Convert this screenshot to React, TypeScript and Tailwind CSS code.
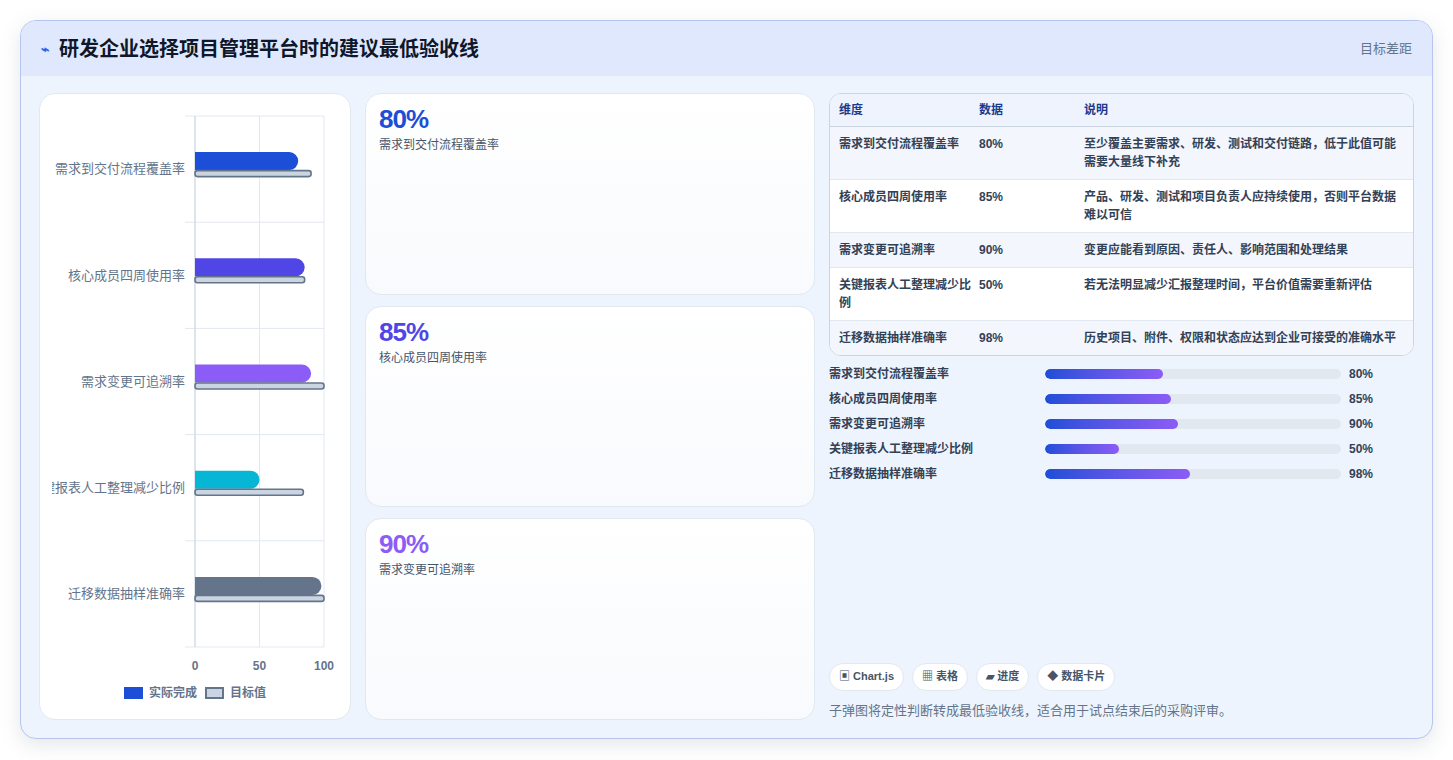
import React from "react";

const rows = [
  { name: "需求到交付流程覆盖率", v: 80, t: 90, c: "#1d4ed8" },
  { name: "核心成员四周使用率", v: 85, t: 85, c: "#4f46e5" },
  { name: "需求变更可追溯率", v: 90, t: 100, c: "#8b5cf6" },
  { name: "关键报表人工整理减少比例", v: 50, t: 84, c: "#06b6d4" },
  { name: "迁移数据抽样准确率", v: 98, t: 100, c: "#64748b" },
];

const table = [
  ["需求到交付流程覆盖率", "80%", "至少覆盖主要需求、研发、测试和交付链路，低于此值可能需要大量线下补充"],
  ["核心成员四周使用率", "85%", "产品、研发、测试和项目负责人应持续使用，否则平台数据难以可信"],
  ["需求变更可追溯率", "90%", "变更应能看到原因、责任人、影响范围和处理结果"],
  ["关键报表人工整理减少比例", "50%", "若无法明显减少汇报整理时间，平台价值需要重新评估"],
  ["迁移数据抽样准确率", "98%", "历史项目、附件、权限和状态应达到企业可接受的准确水平"],
];

function Chart() {
  const x0 = 155, sc = 1.29, top = 22, rh = 106.2;
  return (
    <svg width="311" height="600" className="block">
      {[0, 50, 100].map((g) => (
        <line key={g} x1={x0 + g * sc} x2={x0 + g * sc} y1={top} y2={top + rh * 5} stroke="#e2e8f0" />
      ))}
      {[0, 1, 2, 3, 4, 5].map((i) => (
        <line key={i} x1={x0 - 10} x2={x0 + 100 * sc} y1={top + i * rh} y2={top + i * rh} stroke="#e2e8f0" />
      ))}
      <line x1={x0} x2={x0} y1={top} y2={top + rh * 5} stroke="#cbd5e1" />
      {rows.map((r, i) => {
        const cy = top + i * rh + rh / 2;
        return (
          <g key={i}>
            <path d={`M${x0} ${cy - 17} H${x0 + r.v * sc - 9} a9 9 0 0 1 9 9 v0 a9 9 0 0 1 -9 9 H${x0} Z`} fill={r.c} />
            <rect x={x0} y={cy + 1.5} width={r.t * sc} height={6} rx={2.5} fill="#cbd5e1" stroke="#64748b" strokeWidth={1.6} />
          </g>
        );
      })}
      {[0, 50, 100].map((g) => (
        <text key={g} x={x0 + g * sc} y={top + rh * 5 + 23} textAnchor="middle" fontSize="12" fontWeight="700" fill="#64748b" fontFamily="Liberation Sans, sans-serif">{g}</text>
      ))}
    </svg>
  );
}

export default function App() {
  return (
    <div className="w-[1453px] h-[760px] bg-white p-5 pb-5" style={{ fontFamily: '"Liberation Sans", "Noto Sans CJK SC", sans-serif' }}>
      <div className="h-[719px] rounded-2xl border border-[#b8c6ef] bg-[#eef4fe] overflow-hidden shadow-[0_6px_20px_rgba(100,116,139,0.18)] flex flex-col">
        <div className="h-[55px] bg-[#dfe8fd] flex items-center justify-between px-5 shrink-0">
          <div className="flex items-center gap-2.5">
            <span className="text-[#2563eb] text-sm font-bold">⌁</span>
            <span className="text-[20px] font-bold text-[#0f172a]">研发企业选择项目管理平台时的建议最低验收线</span>
          </div>
          <span className="text-[13px] text-[#64748b]">目标差距</span>
        </div>
        <div className="flex-1 flex gap-[14px] px-[18px] pt-[17px] pb-[18px]">
          <div className="w-[312px] bg-white rounded-2xl border border-[#e2e8f0] relative overflow-hidden">
            <div className="absolute left-0 top-0"><Chart /></div>
            <div className="absolute left-[12px] top-[22px] w-[133px] flex flex-col overflow-hidden">
              {rows.map((r) => (
                <div key={r.name} className="h-[106.2px] flex items-center justify-end text-[13px] text-[#64748b] whitespace-nowrap">
                  {r.name}
                </div>
              ))}
            </div>
            <div className="absolute left-0 right-0 top-[590px] flex justify-center gap-2 text-[12px] font-bold text-[#64748b]">
              <span className="flex items-center gap-1.5"><span className="w-[19px] h-[12px] bg-[#1d4ed8] inline-block" />实际完成</span>
              <span className="flex items-center gap-1.5"><span className="w-[19px] h-[12px] bg-[#cbd5e1] border-2 border-[#64748b] inline-block" />目标值</span>
            </div>
          </div>
          <div className="w-[450px] flex flex-col gap-[11px]">
            {[["80%", "#1d4ed8", rows[0].name], ["85%", "#4f46e5", rows[1].name], ["90%", "#8b5cf6", rows[2].name]].map(([v, c, n]) => (
              <div key={v} className="flex-1 rounded-2xl border border-[#e2e8f0] bg-gradient-to-b from-white to-[#f8fafd] px-[13px] py-[10px]">
                <div className="text-[26px] font-bold tracking-[-1px] leading-[30px]" style={{ color: c }}>{v}</div>
                <div className="text-[12px] text-[#475569] mt-0.5">{n}</div>
              </div>
            ))}
          </div>
          <div className="flex-1 flex flex-col">
            <div className="rounded-xl border border-[#cbd5e1] overflow-hidden text-[12px] bg-white">
              <div className="flex bg-[#eef3fe] border-b border-[#cbd5e1] h-[33px] items-center font-bold text-[#1e3a8a]">
                <div className="w-[149px] pl-[9px]">维度</div>
                <div className="w-[105px]">数据</div>
                <div className="flex-1">说明</div>
              </div>
              {table.map((r, i) => (
                <div key={i} className={`flex py-[8px] font-bold text-[#334155] leading-[18px] ${i % 2 === 0 ? "bg-[#f3f6fc]" : "bg-white"} ${i < 4 ? "border-b border-[#e2e8f0]" : ""}`}>
                  <div className="w-[149px] pl-[9px] pr-2">{r[0]}</div>
                  <div className="w-[105px]">{r[1]}</div>
                  <div className="flex-1 pr-3">{r[2]}</div>
                </div>
              ))}
            </div>
            <div className="mt-[9px] flex flex-col gap-[7px]">
              {rows.map((r) => (
                <div key={r.name} className="flex items-center h-[18px] text-[12px] font-bold text-[#334155]">
                  <div className="w-[216px]">{r.name}</div>
                  <div className="w-[296px] h-[10px] rounded-full bg-[#e2e8f0] overflow-hidden">
                    <div className="h-full rounded-full bg-gradient-to-r from-[#1d4ed8] to-[#8b5cf6]" style={{ width: `${r.v / 2}%` }} />
                  </div>
                  <div className="ml-2">{r.v}%</div>
                </div>
              ))}
            </div>
            <div className="flex-1" />
            <div className="flex gap-2 text-[11px] font-bold text-[#475569]">
              {["▣ Chart.js", "▦ 表格", "▰ 进度", "◆ 数据卡片"].map((t) => (
                <span key={t} className="px-[9px] h-[28px] flex items-center rounded-full bg-white border border-[#e2e8f0]">{t}</span>
              ))}
            </div>
            <div className="mt-[10px] text-[13px] text-[#64748b]">子弹图将定性判断转成最低验收线，适合用于试点结束后的采购评审。</div>
          </div>
        </div>
      </div>
    </div>
  );
}
